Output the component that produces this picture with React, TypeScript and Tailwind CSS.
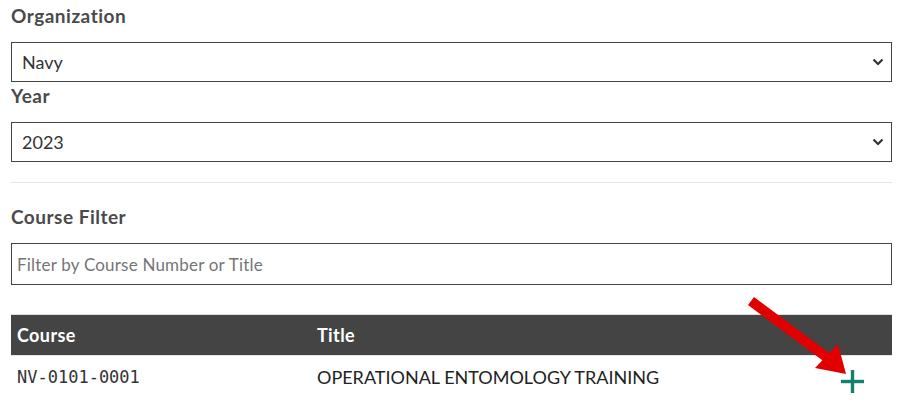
import { useState } from 'react';

const font = { fontFamily: 'Lato, "Open Sans", sans-serif' };

function Chevron() {
  return (
    <svg
      className="pointer-events-none absolute right-[8px] top-1/2 -translate-y-1/2"
      width="12"
      height="8"
      viewBox="0 0 12 8"
      fill="none"
    >
      <path d="M1.5 1.5 6 6l4.5-4.5" stroke="#333" strokeWidth="2.2" />
    </svg>
  );
}

function SelectField({ label, value, options }: { label: string; value: string; options: string[] }) {
  const [current, setCurrent] = useState(value);
  return (
    <div>
      <label className="block text-[19px] leading-[27px] font-bold tracking-[0.5px] text-[#4a4a4a] mb-[13px]">{label}</label>
      <div className="relative">
        <select
          value={current}
          onChange={(e) => setCurrent(e.target.value)}
          className="appearance-none block w-full h-[40px] border border-[#444] bg-white pl-[10px] pr-8 text-[18px] text-[#333] outline-none"
          style={font}
        >
          {options.map((o) => (
            <option key={o} value={o}>
              {o}
            </option>
          ))}
        </select>
        <Chevron />
      </div>
    </div>
  );
}

export default function App() {
  return (
    <div className="relative bg-white min-h-[407px] overflow-hidden" style={font}>
      <div className="ml-[11px] w-[881px] pt-[2px]">
        <SelectField label="Organization" value="Navy" options={['Army', 'Navy', 'Air Force', 'Marine Corps']} />
        <SelectField label="Year" value="2023" options={['2021', '2022', '2023', '2024']} />

        <hr className="mt-[20px] mb-[20px] border-0 border-t border-[#e5e5e5]" />

        <label
          htmlFor="courseFilter"
          className="block text-[19px] leading-[27px] font-bold tracking-[0.5px] text-[#4a4a4a] mb-[13px]"
        >
          Course Filter
        </label>
        <input
          id="courseFilter"
          type="text"
          placeholder="Filter by Course Number or Title"
          className="block w-full h-[42px] border border-[#444] px-[5px] text-[17px] tracking-[0.2px] text-[#333] placeholder:text-[#757575] outline-none"
          style={font}
        />

        <div className="mt-[29px] border-t border-[#dedede]">
          <div className="grid grid-cols-[306px_1fr_80px] h-[40px] items-center bg-[#444] text-white text-[18px] font-bold tracking-[0.4px]">
            <div className="pl-[6px]">Course</div>
            <div>Title</div>
            <div />
          </div>
          <div className="grid grid-cols-[306px_1fr_80px] h-[44px] items-center border-t border-[#e5e5e5]">
            <div className="pl-[6px] text-[17px] text-[#333]" style={{ fontFamily: '"DejaVu Sans Mono", monospace' }}>
              NV-0101-0001
            </div>
            <div className="text-[18px] text-[#222]">OPERATIONAL ENTOMOLOGY TRAINING</div>
            <div className="flex justify-center pt-[8px]">
              <button type="button" aria-label="Add course" className="p-0">
                <svg width="23" height="23" viewBox="0 0 23 23">
                  <rect x="0" y="9.8" width="23" height="3.4" fill="#14806f" />
                  <rect x="9.8" y="0" width="3.4" height="23" fill="#14806f" />
                </svg>
              </button>
            </div>
          </div>
        </div>
      </div>

      {/* annotation arrow */}
      <svg className="pointer-events-none absolute left-0 top-0" width="906" height="407" viewBox="0 0 906 407">
        <line x1="751" y1="301" x2="829" y2="359" stroke="#e00000" strokeWidth="10" />
        <polygon points="846,374 815,368 838,344" fill="#e00000" />
      </svg>
    </div>
  );
}
